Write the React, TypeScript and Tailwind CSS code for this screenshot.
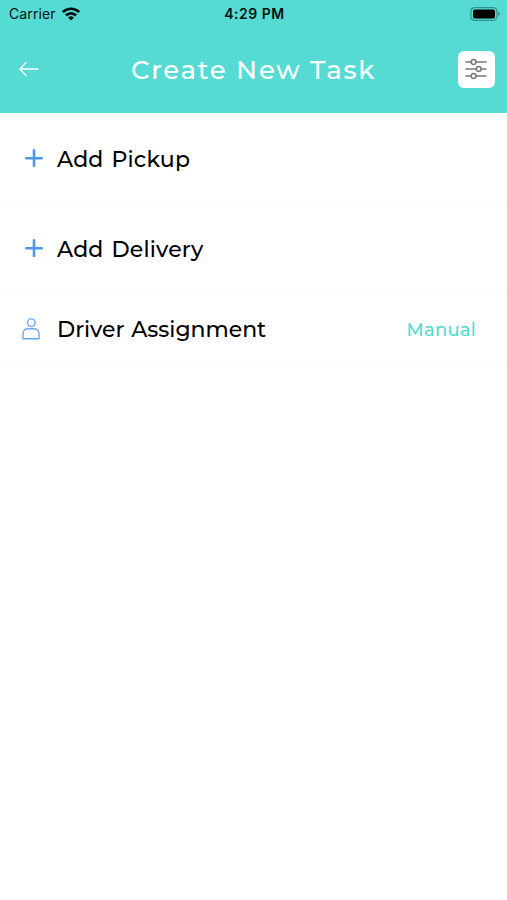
import React from 'react';
import clsx from 'clsx';

interface TaskRowProps {
  icon: React.ReactNode;
  label: string;
  labelClassName: string;
  value?: string;
  className?: string;
}

const WifiIcon = () => (
  <svg className="w-[18px] h-[14px]" viewBox="0 0 18 14" fill="none" stroke="#06110f" strokeWidth="2.7">
    <path d="M0.9 5.1a11.5 11.5 0 0 1 16.2 0" />
    <path d="M3.9 8.5a7.2 7.2 0 0 1 10.2 0" />
    <path d="M9 13.6 6.1 10.8a4.1 4.1 0 0 1 5.8 0z" fill="#06110f" stroke="none" />
  </svg>
);

const BatteryIcon = () => (
  <svg className="w-[30px] h-[14px]" viewBox="0 0 30 14" fill="none">
    <rect x="0.9" y="0.7" width="26" height="12.6" rx="3.6" stroke="#35928c" strokeWidth="1.2" />
    <rect x="3" y="2.4" width="22" height="9.2" rx="1.8" fill="#000" />
    <path d="M28.2 5v4c1-.4 1.6-1.1 1.6-2s-.6-1.6-1.6-2z" fill="#35928c" />
  </svg>
);

const BackIcon = () => (
  <svg className="w-5 h-4" viewBox="0 0 20 16" fill="none" stroke="#fff" strokeWidth="1.4" strokeLinecap="round" strokeLinejoin="round">
    <path d="M19 8H1M7 1.6 1 8l6 6.4" />
  </svg>
);

const FilterIcon = () => (
  <svg className="w-[22px] h-[22px]" viewBox="0 0 22 22" fill="#fff" stroke="#777" strokeWidth="1.5" strokeLinecap="round">
    <path d="M1 4h20M1 11h20M1 18h20" />
    <circle cx="8.6" cy="4" r="2.4" />
    <circle cx="13.7" cy="11" r="2.4" />
    <circle cx="8.6" cy="18" r="2.4" />
  </svg>
);

const PlusIcon = () => (
  <svg className="w-[18px] h-[18px] ml-[25px]" viewBox="0 0 18 18" stroke="#4a97f2" strokeWidth="2.6" strokeLinecap="round">
    <path d="M9 1.4v15.4M1.3 9.2h15.4" />
  </svg>
);

const DriverIcon = () => (
  <svg className="w-[18px] h-[22px] ml-[22px] mt-[3px]" viewBox="0 0 18 22" fill="none" stroke="#68a9f4" strokeWidth="1.4" strokeLinejoin="round">
    <circle cx="9.3" cy="4.7" r="3.8" />
    <path d="M1 20.8v-5.1c0-3.2 2.4-5 5.2-5h5.6c2.8 0 5.2 1.8 5.2 5v5.1z" />
  </svg>
);

const TaskRow: React.FC<TaskRowProps> = ({ icon, label, labelClassName, value, className }) => (
  <div className={clsx('flex items-center border-b border-[#fafafa] pr-[31px]', className)}>
    <div className="w-[57px] shrink-0">{icon}</div>
    <span className={clsx('text-[22px] leading-7 font-medium text-black whitespace-nowrap', labelClassName)}>{label}</span>
    {value && <span className="ml-auto pt-[5px] text-[18px] leading-6 font-medium tracking-[0.2px] text-[#55dbd2]">{value}</span>}
  </div>
);

const App: React.FC = () => {
  return (
    <div className="min-h-screen bg-white font-['Montserrat','Inter',sans-serif]">
      <header className="h-[113px] bg-[#55dbd3]">
        <div className="grid grid-cols-3 items-center h-[27px] pl-[9px] pr-[7px] font-['Inter',sans-serif] text-[#06110f]">
          <div className="flex items-center gap-[6px]">
            <span className="text-[14px] leading-4 tracking-[0.1px]">Carrier</span>
            <WifiIcon />
          </div>
          <span className="text-center text-[14px] leading-4 font-semibold tracking-[0.5px]">4:29 PM</span>
          <div className="flex justify-end">
            <BatteryIcon />
          </div>
        </div>
        <div className="flex items-center justify-between h-[84px] pl-[19px] pr-3">
          <button type="button" aria-label="Back" className="w-[37px]">
            <BackIcon />
          </button>
          <h1 className="pt-0.5 pr-[7px] text-[26px] leading-8 font-medium tracking-[1.7px] text-white whitespace-nowrap">Create New Task</h1>
          <button type="button" aria-label="Filter" className="flex items-center justify-center w-[37px] h-[37px] rounded-[6px] bg-white">
            <FilterIcon />
          </button>
        </div>
      </header>
      <main>
        <TaskRow icon={<PlusIcon />} label="Add Pickup" labelClassName="pt-1 tracking-[0.15px] [word-spacing:2px]" className="h-[90px]" />
        <TaskRow icon={<PlusIcon />} label="Add Delivery" labelClassName="pt-1 tracking-[0.15px] [word-spacing:2px]" className="h-[90px]" />
        <TaskRow icon={<DriverIcon />} label="Driver Assignment" labelClassName="pt-[5px] tracking-[-0.03px] [word-spacing:1px]" value="Manual" className="h-[69px]" />
      </main>
    </div>
  );
};

export default App;
